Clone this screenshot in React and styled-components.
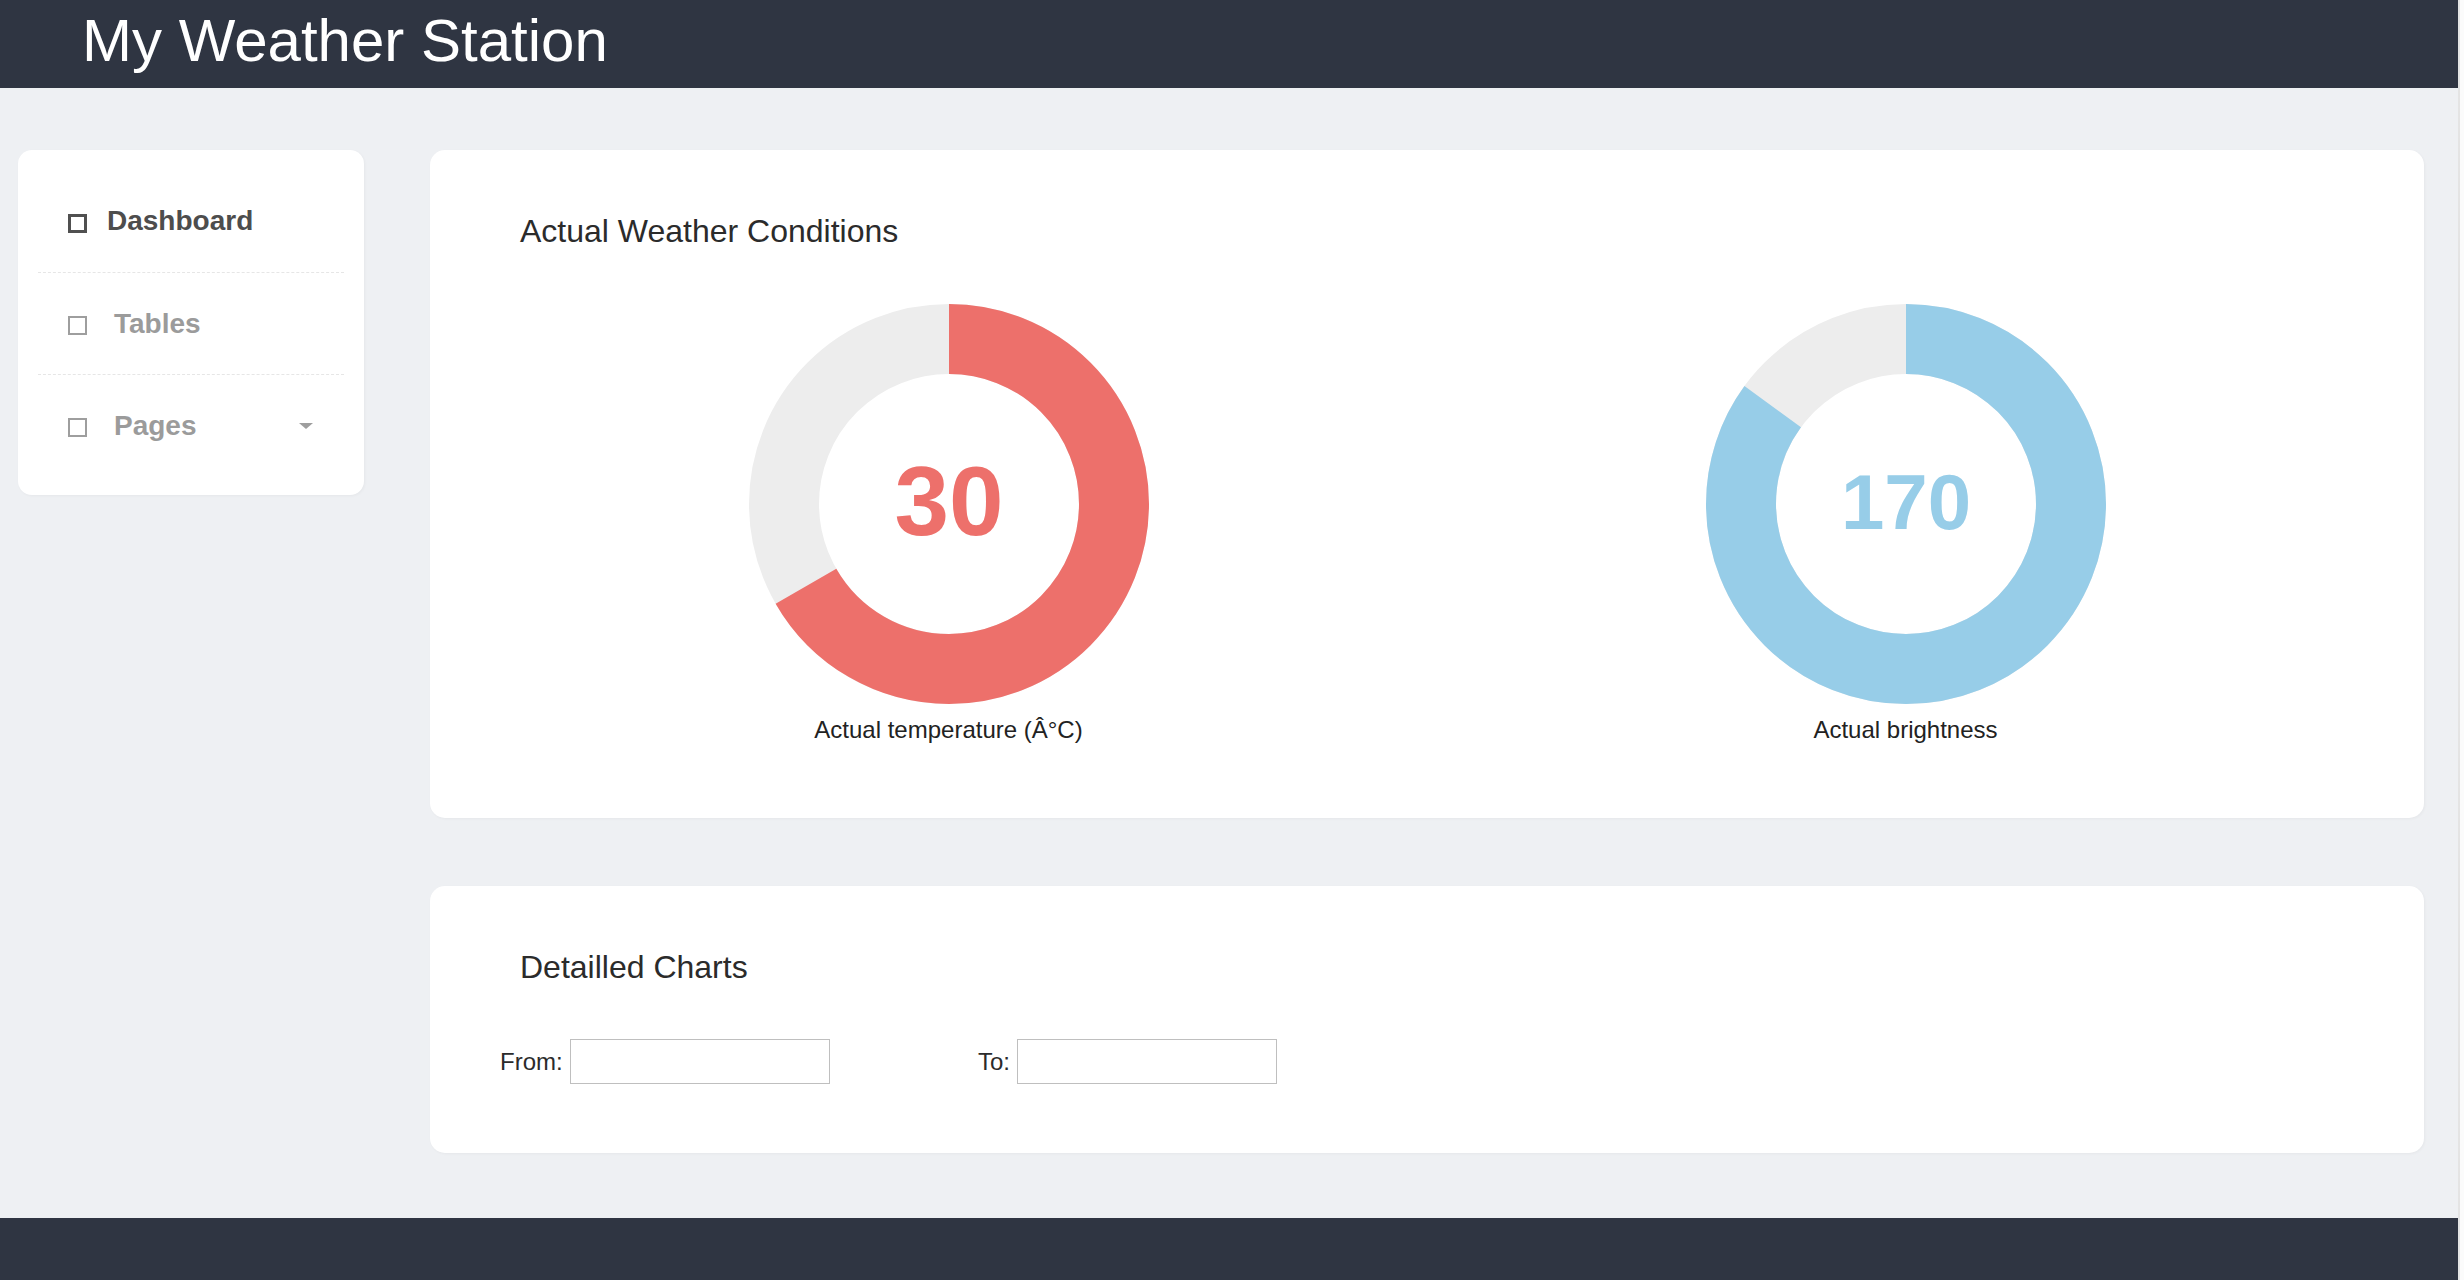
import React from 'react';
import styled, { createGlobalStyle } from 'styled-components';

const GlobalStyle = createGlobalStyle`
  html, body {
    margin: 0;
    padding: 0;
    background: #ffffff;
  }
  body {
    font-family: "Liberation Sans", Arial, Helvetica, sans-serif;
  }
  * {
    box-sizing: border-box;
  }
`;

const Frame = styled.div`
  display: flex;
  min-height: 100vh;
`;

const ScrollEdge = styled.div`
  width: 6px;
  border-left: 2px solid #e4e4e4;
  background: #fbfbfb;
`;

const Page = styled.div`
  flex: 1;
  display: flex;
  flex-direction: column;
  background: #eef0f3;
`;

const Header = styled.header`
  height: 88px;
  background: #2f3542;
  padding-left: 82px;
  h1 {
    margin: 0;
    font-size: 60px;
    font-weight: 400;
    line-height: 82px;
    color: #ffffff;
  }
`;

const Footer = styled.footer`
  height: 62px;
  background: #2f3542;
`;

const Body = styled.div`
  flex: 1;
  display: flex;
  align-items: flex-start;
  gap: 66px;
  padding: 62px 34px 65px 18px;
`;

const Sidebar = styled.nav`
  width: 346px;
  background: #ffffff;
  border-radius: 14px;
  padding: 20px 20px 19px;
  box-shadow: 1px 1px 3px rgba(0, 0, 0, 0.04);
`;

const NavItem = styled.div`
  display: flex;
  align-items: center;
  height: 102px;
  padding: 0 31px 0 30px;
  gap: ${(props) => (props.active ? '20px' : '27px')};
  font-size: 28px;
  font-weight: 700;
  color: ${(props) => (props.active ? '#4d4d4d' : '#9b9b9b')};
  & + & {
    border-top: 1.5px dashed #e6e6e6;
  }
  span {
    flex: 1;
  }
`;

const NavIcon = styled.i`
  display: block;
  width: 19px;
  height: 19px;
  margin-top: 4px;
  border: ${(props) => (props.active ? '3px solid #505050' : '2.5px solid #9e9e9e')};
`;

const Caret = styled.b`
  width: 0;
  height: 0;
  border-left: 7.5px solid transparent;
  border-right: 7.5px solid transparent;
  border-top: 6px solid #9e9e9e;
`;

const Main = styled.main`
  flex: 1;
  display: flex;
  flex-direction: column;
  gap: 68px;
`;

const Card = styled.section`
  background: #ffffff;
  border-radius: 15px;
  padding: 63px 40px ${(props) => props.bottom || '69px'};
  box-shadow: 1px 1px 3px rgba(0, 0, 0, 0.04);
`;

const CardTitle = styled.h2`
  margin: 0 0 0 50px;
  font-size: 32px;
  font-weight: 400;
  color: #2b2b2b;
`;

const GaugeRow = styled.div`
  display: grid;
  grid-template-columns: 1fr 1fr;
  margin-top: 54px;
`;

const GaugeBox = styled.div`
  display: flex;
  flex-direction: column;
  align-items: center;
  svg {
    display: block;
  }
`;

const GaugeLabel = styled.div`
  margin-top: 12px;
  font-size: 24px;
  line-height: 28px;
  color: #222222;
`;

const DateRow = styled.div`
  display: grid;
  grid-template-columns: 478px 478px;
  margin: 53px 0 0 30px;
`;

const Field = styled.label`
  display: flex;
  align-items: center;
  gap: 7px;
  font-size: 24px;
  color: #2b2b2b;
  input {
    width: 260px;
    height: 45px;
    border: 1.5px solid #bfbfbf;
    background: #ffffff;
    font: inherit;
    margin: 0;
  }
`;

const R = 165;
const CIRC = 2 * Math.PI * R;

const Gauge = ({ value, max, color, size, baseline, label }) => {
  const dash = (value / max) * CIRC;
  return (
    <GaugeBox>
      <svg width="400" height="400" viewBox="0 0 400 400">
        <circle cx="200" cy="200" r={R} fill="none" stroke="#ededed" strokeWidth="70" />
        <circle
          cx="200"
          cy="200"
          r={R}
          fill="none"
          stroke={color}
          strokeWidth="70"
          strokeDasharray={`${dash} ${CIRC}`}
          transform="rotate(-90 200 200)"
        />
        <text
          x="200"
          y={baseline}
          textAnchor="middle"
          fill={color}
          fontSize={size}
          fontWeight="700"
          fontFamily='"Liberation Sans", Arial, sans-serif'
        >
          {value}
        </text>
      </svg>
      <GaugeLabel>{label}</GaugeLabel>
    </GaugeBox>
  );
};

const navItems = [
  { label: 'Dashboard', active: true },
  { label: 'Tables' },
  { label: 'Pages', caret: true },
];

const App = () => {
  return (
    <>
      <GlobalStyle />
      <Frame>
        <Page>
          <Header>
            <h1>My Weather Station</h1>
          </Header>
          <Body>
            <Sidebar>
              {navItems.map((item) => (
                <NavItem key={item.label} active={item.active}>
                  <NavIcon active={item.active} />
                  <span>{item.label}</span>
                  {item.caret && <Caret />}
                </NavItem>
              ))}
            </Sidebar>
            <Main>
              <Card bottom="74px">
                <CardTitle>Actual Weather Conditions</CardTitle>
                <GaugeRow>
                  <Gauge
                    value={30}
                    max={45}
                    color="#ed706b"
                    size={98}
                    baseline={231}
                    label="Actual temperature (Â°C)"
                  />
                  <Gauge
                    value={170}
                    max={200}
                    color="#97cde8"
                    size={78}
                    baseline={225}
                    label="Actual brightness"
                  />
                </GaugeRow>
              </Card>
              <Card>
                <CardTitle>Detailled Charts</CardTitle>
                <DateRow>
                  <Field>
                    From:
                    <input type="text" />
                  </Field>
                  <Field>
                    To:
                    <input type="text" />
                  </Field>
                </DateRow>
              </Card>
            </Main>
          </Body>
          <Footer />
        </Page>
        <ScrollEdge />
      </Frame>
    </>
  );
};

export default App;
